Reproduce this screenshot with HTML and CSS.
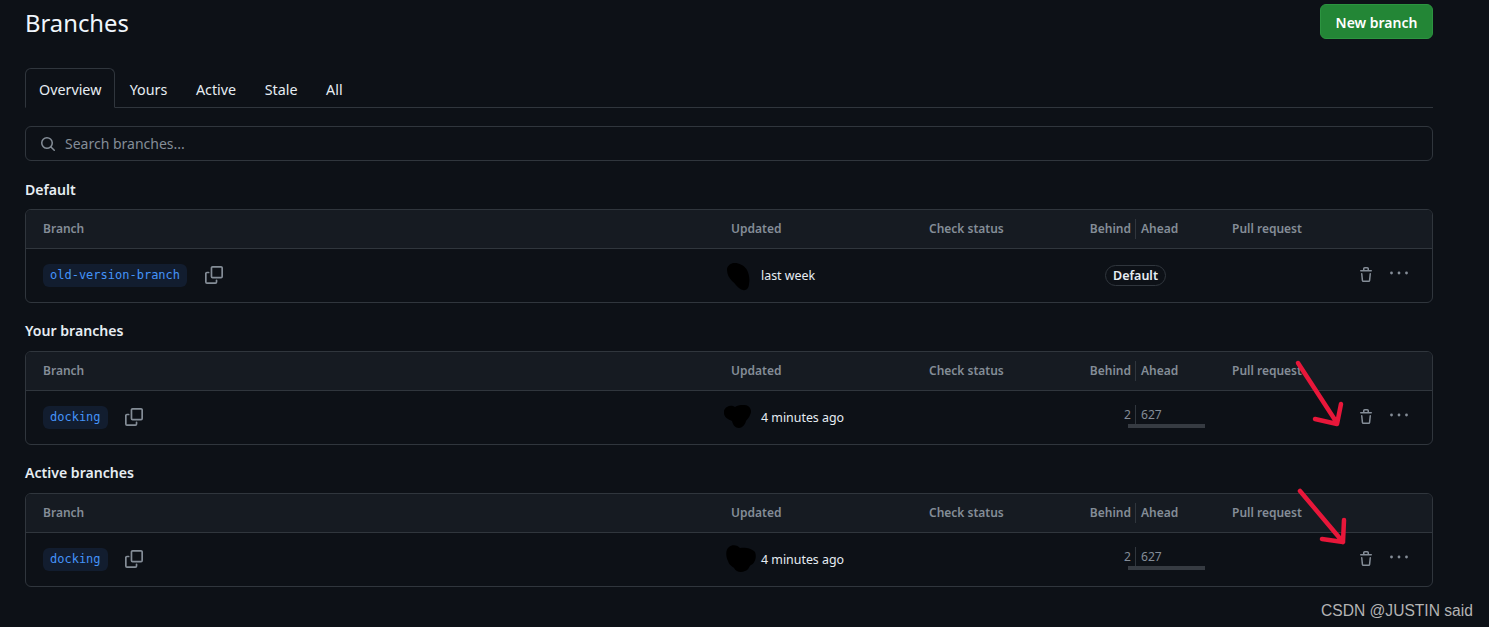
FILE: index.html
```html
<!DOCTYPE html>
<html lang="en">
<head>
<meta charset="utf-8">
<title>Branches</title>
<link rel="stylesheet" href="styles.css">
</head>
<body>
<main class="page">
  <header class="title-bar">
    <h1 class="title">Branches</h1>
    <button class="new-branch">New branch</button>
  </header>
  <nav class="tabs">
    <a class="tab tab-active">Overview</a>
    <a class="tab">Yours</a>
    <a class="tab">Active</a>
    <a class="tab">Stale</a>
    <a class="tab">All</a>
  </nav>
  <div class="search">
    <svg class="search-icon" viewBox="0 0 16 16"><path d="M10.68 11.74a6 6 0 0 1-7.922-8.982 6 6 0 0 1 8.982 7.922l3.04 3.04a.749.749 0 0 1-.326 1.275.749.749 0 0 1-.734-.215ZM11.5 7a4.499 4.499 0 1 0-8.997 0A4.499 4.499 0 0 0 11.5 7Z"/></svg>
    <span>Search branches...</span>
  </div>

  <section class="group group-first">
    <h2 class="group-title">Default</h2>
    <div class="box">
      <div class="row head">
        <span>Branch</span><span>Updated</span><span>Check status</span>
        <span class="ba"><span class="ba-l">Behind</span><span class="ba-r">Ahead</span></span>
        <span>Pull request</span><span></span>
      </div>
      <div class="row body">
        <span class="branch-cell"><code class="ref">old-version-branch</code>
          <svg class="copy" viewBox="0 0 16 16"><path d="M0 6.75C0 5.784.784 5 1.75 5h1.5a.75.75 0 0 1 0 1.5h-1.5a.25.25 0 0 0-.25.25v7.5c0 .138.112.25.25.25h7.5a.25.25 0 0 0 .25-.25v-1.5a.75.75 0 0 1 1.5 0v1.5A1.75 1.75 0 0 1 9.25 16h-7.5A1.75 1.75 0 0 1 0 14.25Z"/><path d="M5 1.75C5 .784 5.784 0 6.75 0h7.5C15.216 0 16 .784 16 1.75v7.5A1.75 1.75 0 0 1 14.25 11h-7.5A1.75 1.75 0 0 1 5 9.25Zm1.75-.25a.25.25 0 0 0-.25.25v7.5c0 .138.112.25.25.25h7.5a.25.25 0 0 0 .25-.25v-7.5a.25.25 0 0 0-.25-.25Z"/></svg>
        </span>
        <span class="updated">
          <svg class="scribble s1" viewBox="0 0 24 28"><path d="M6 0C11-1 18 3 20 7 22 11 23 16 22 21 22 25 19 28 16 27 11 26 9 21 5 18 2 15 0 11 0 7 0 3 3 1 6 0Z"/></svg>
          last week
        </span>
        <span></span>
        <span class="ba"><span class="pill">Default</span></span>
        <span></span>
        <span class="actions">
          <svg class="trash" viewBox="0 0 16 16"><path d="M11 1.75V3h2.25a.75.75 0 0 1 0 1.5H2.75a.75.75 0 0 1 0-1.5H5V1.75C5 .784 5.784 0 6.75 0h2.5C10.216 0 11 .784 11 1.75ZM4.496 6.675l.66 6.6a.25.25 0 0 0 .249.225h5.19a.25.25 0 0 0 .249-.225l.66-6.6a.75.75 0 0 1 1.492.149l-.66 6.6A1.748 1.748 0 0 1 10.595 15h-5.19a1.75 1.75 0 0 1-1.741-1.575l-.66-6.6a.75.75 0 1 1 1.492-.15ZM6.5 1.75V3h3V1.75a.25.25 0 0 0-.25-.25h-2.5a.25.25 0 0 0-.25.25Z"/></svg>
          <svg class="kebab" viewBox="0 0 18 4"><circle cx="1.5" cy="2" r="1.4"/><circle cx="9" cy="2" r="1.4"/><circle cx="16.5" cy="2" r="1.4"/></svg>
        </span>
      </div>
    </div>
  </section>

  <section class="group">
    <h2 class="group-title">Your branches</h2>
    <div class="box">
      <div class="row head">
        <span>Branch</span><span>Updated</span><span>Check status</span>
        <span class="ba"><span class="ba-l">Behind</span><span class="ba-r">Ahead</span></span>
        <span>Pull request</span><span></span>
      </div>
      <div class="row body">
        <span class="branch-cell"><code class="ref">docking</code>
          <svg class="copy" viewBox="0 0 16 16"><path d="M0 6.75C0 5.784.784 5 1.75 5h1.5a.75.75 0 0 1 0 1.5h-1.5a.25.25 0 0 0-.25.25v7.5c0 .138.112.25.25.25h7.5a.25.25 0 0 0 .25-.25v-1.5a.75.75 0 0 1 1.5 0v1.5A1.75 1.75 0 0 1 9.25 16h-7.5A1.75 1.75 0 0 1 0 14.25Z"/><path d="M5 1.75C5 .784 5.784 0 6.75 0h7.5C15.216 0 16 .784 16 1.75v7.5A1.75 1.75 0 0 1 14.25 11h-7.5A1.75 1.75 0 0 1 5 9.25Zm1.75-.25a.25.25 0 0 0-.25.25v7.5c0 .138.112.25.25.25h7.5a.25.25 0 0 0 .25-.25v-7.5a.25.25 0 0 0-.25-.25Z"/></svg>
        </span>
        <span class="updated">
          <svg class="scribble s2" viewBox="0 0 28 25"><path d="M3 2C6 0 9 1 11 2 14 0 20-1 24 1 27 3 28 7 26 10 25 13 23 14 22 16 21 20 18 23 15 23 11 23 9 20 8 16 4 14 1 13 0 9-1 6 1 3 3 2Z"/></svg>
          4 minutes ago
        </span>
        <span></span>
        <span class="ba-stack">
          <span class="ba num"><span class="ba-l">2</span><span class="ba-r">627</span></span>
          <span class="meter"></span>
        </span>
        <span></span>
        <span class="actions">
          <svg class="trash" viewBox="0 0 16 16"><path d="M11 1.75V3h2.25a.75.75 0 0 1 0 1.5H2.75a.75.75 0 0 1 0-1.5H5V1.75C5 .784 5.784 0 6.75 0h2.5C10.216 0 11 .784 11 1.75ZM4.496 6.675l.66 6.6a.25.25 0 0 0 .249.225h5.19a.25.25 0 0 0 .249-.225l.66-6.6a.75.75 0 0 1 1.492.149l-.66 6.6A1.748 1.748 0 0 1 10.595 15h-5.19a1.75 1.75 0 0 1-1.741-1.575l-.66-6.6a.75.75 0 1 1 1.492-.15ZM6.5 1.75V3h3V1.75a.25.25 0 0 0-.25-.25h-2.5a.25.25 0 0 0-.25.25Z"/></svg>
          <svg class="kebab" viewBox="0 0 18 4"><circle cx="1.5" cy="2" r="1.4"/><circle cx="9" cy="2" r="1.4"/><circle cx="16.5" cy="2" r="1.4"/></svg>
        </span>
      </div>
    </div>
  </section>

  <section class="group">
    <h2 class="group-title">Active branches</h2>
    <div class="box">
      <div class="row head">
        <span>Branch</span><span>Updated</span><span>Check status</span>
        <span class="ba"><span class="ba-l">Behind</span><span class="ba-r">Ahead</span></span>
        <span>Pull request</span><span></span>
      </div>
      <div class="row body">
        <span class="branch-cell"><code class="ref">docking</code>
          <svg class="copy" viewBox="0 0 16 16"><path d="M0 6.75C0 5.784.784 5 1.75 5h1.5a.75.75 0 0 1 0 1.5h-1.5a.25.25 0 0 0-.25.25v7.5c0 .138.112.25.25.25h7.5a.25.25 0 0 0 .25-.25v-1.5a.75.75 0 0 1 1.5 0v1.5A1.75 1.75 0 0 1 9.25 16h-7.5A1.75 1.75 0 0 1 0 14.25Z"/><path d="M5 1.75C5 .784 5.784 0 6.75 0h7.5C15.216 0 16 .784 16 1.75v7.5A1.75 1.75 0 0 1 14.25 11h-7.5A1.75 1.75 0 0 1 5 9.25Zm1.75-.25a.25.25 0 0 0-.25.25v7.5c0 .138.112.25.25.25h7.5a.25.25 0 0 0 .25-.25v-7.5a.25.25 0 0 0-.25-.25Z"/></svg>
        </span>
        <span class="updated">
          <svg class="scribble s3" viewBox="0 0 30 28"><path d="M3 2C6-1 12 0 14 3 18 2 26 3 29 7 31 12 29 18 25 20 23 21 23 25 19 26 15 28 10 27 8 23 6 21 3 20 2 16 0 12-1 5 3 2Z"/></svg>
          4 minutes ago
        </span>
        <span></span>
        <span class="ba-stack">
          <span class="ba num"><span class="ba-l">2</span><span class="ba-r">627</span></span>
          <span class="meter"></span>
        </span>
        <span></span>
        <span class="actions">
          <svg class="trash" viewBox="0 0 16 16"><path d="M11 1.75V3h2.25a.75.75 0 0 1 0 1.5H2.75a.75.75 0 0 1 0-1.5H5V1.75C5 .784 5.784 0 6.75 0h2.5C10.216 0 11 .784 11 1.75ZM4.496 6.675l.66 6.6a.25.25 0 0 0 .249.225h5.19a.25.25 0 0 0 .249-.225l.66-6.6a.75.75 0 0 1 1.492.149l-.66 6.6A1.748 1.748 0 0 1 10.595 15h-5.19a1.75 1.75 0 0 1-1.741-1.575l-.66-6.6a.75.75 0 1 1 1.492-.15ZM6.5 1.75V3h3V1.75a.25.25 0 0 0-.25-.25h-2.5a.25.25 0 0 0-.25.25Z"/></svg>
          <svg class="kebab" viewBox="0 0 18 4"><circle cx="1.5" cy="2" r="1.4"/><circle cx="9" cy="2" r="1.4"/><circle cx="16.5" cy="2" r="1.4"/></svg>
        </span>
      </div>
    </div>
  </section>
</main>

<svg class="annotations" viewBox="0 0 1489 627">
  <path d="M1298 363 1337 423M1315 419 1337 424 1341 404"/>
  <path d="M1300 491 1343 542M1322 539 1343 542 1344 520"/>
</svg>
<div class="watermark">CSDN @JUSTIN said</div>
</body>
</html>
```

FILE: styles.css
```css
* { box-sizing: border-box; }
html, body { height: 100%; }
body {
  margin: 0;
  position: relative;
  overflow: hidden;
  background: #0d1117;
  color: #e6edf3;
  font-family: "Noto Sans", "Liberation Sans", sans-serif;
  font-size: 14px;
}
.page { width: 1433px; padding: 4px 0 0 25px; }

.title-bar { display: flex; justify-content: space-between; align-items: flex-start; height: 35px; }
.title { margin: 0; font-size: 23.8px; font-weight: 400; line-height: 38px; color: #f0f6fc; }
.new-branch {
  width: 113px; height: 35px; padding: 2px 0 0;
  background: #238636; color: #fff;
  border: 1px solid #2c9440; border-radius: 6px;
  font: 600 14px "Noto Sans", sans-serif;
}

.tabs { display: flex; margin-top: 29px; height: 40px; border-bottom: 1px solid #30363d; font-size: 14.3px; }
.tab { padding: 0 14.3px; line-height: 43px; color: #e6edf3; height: 40px; }
.tab-active {
  border: 1px solid #30363d; border-bottom: 1px solid #0d1117;
  border-radius: 6px 6px 0 0;
  padding: 0 13px; line-height: 42px; height: 40px;
  background: #0d1117;
}

.search {
  display: flex; align-items: center; gap: 9px;
  margin-top: 18px; height: 35px; padding-left: 14px;
  border: 1px solid #30363d; border-radius: 6px;
  color: #848d97;
}
.search-icon { width: 16px; height: 16px; fill: #848d97; }

.group { margin-top: 18.5px; }
.group-title { margin: 0 0 10px; font-size: 14.1px; font-weight: 600; line-height: 20px; color: #e6edf3; }
.group-first { margin-top: 19px; }
.group-first .group-title { margin-bottom: 9px; }

.box { border: 1px solid #30363d; border-radius: 6px; overflow: hidden; }
.row {
  display: grid;
  grid-template-columns: 688px 198px 131px 172px 118px 1fr;
  align-items: center;
  padding-left: 17px;
}
.head {
  height: 38.5px; background: #161b22;
  border-bottom: 1px solid #30363d;
  color: #848d97; font-size: 12px; font-weight: 600; line-height: 20px;
}
.body { height: 53px; }

.ba { display: grid; grid-template-columns: 75px 1fr; }
.ba-l { text-align: right; padding-right: 4px; }
.ba-r { border-left: 1px solid #30363d; padding-left: 5px; }
.head .ba { height: 20px; }
.head .ba-r { height: 20px; }
.num { color: #848d97; font-size: 12.1px; line-height: 20px; }
.ba-stack { display: flex; flex-direction: column; margin-bottom: 2px; }
.meter { display: block; width: 77px; height: 4px; margin: -1px 0 0 68px; background: #363b42; }

.pill {
  grid-column: 1 / 3;
  width: 61px; height: 21px; margin-left: 45px;
  border: 1px solid #30363d; border-radius: 11px;
  font-size: 12.5px; font-weight: 600; line-height: 20px; text-align: center;
  color: #e6edf3;
}

.branch-cell { display: flex; align-items: center; gap: 17.7px; }
.ref {
  display: block; height: 23px; padding: 0 7px;
  background: #121d2f; border-radius: 6px;
  color: #4493f8;
  font: 12px/23px "DejaVu Sans Mono", monospace;
}
.copy { width: 18px; height: 18px; fill: #848d97; }

.updated { position: relative; padding-left: 30px; font-size: 12.4px; color: #e6edf3; }
.scribble { position: absolute; fill: #000; }
.s1 { left: -4px; top: -3.5px; width: 24px; height: 28px; }
.s2 { left: -7px; top: -3.5px; width: 28px; height: 25px; }
.s3 { left: -5px; top: -6px; width: 30px; height: 28px; }

.actions { display: flex; align-items: center; padding-left: 8px; gap: 16px; }
.trash { width: 16px; height: 16px; fill: #848d97; }
.kebab { width: 18px; height: 4px; fill: #848d97; margin-bottom: 5px; }

.annotations {
  position: absolute; left: 0; top: 0; width: 1489px; height: 627px;
  fill: none; stroke: #e8173a; stroke-width: 4.5; stroke-linecap: round; stroke-linejoin: round;
  pointer-events: none;
}
.watermark {
  position: absolute; left: 1321px; top: 601px;
  font: 15.6px/20px "Liberation Sans", sans-serif; color: #b4b4b4;
}
```
